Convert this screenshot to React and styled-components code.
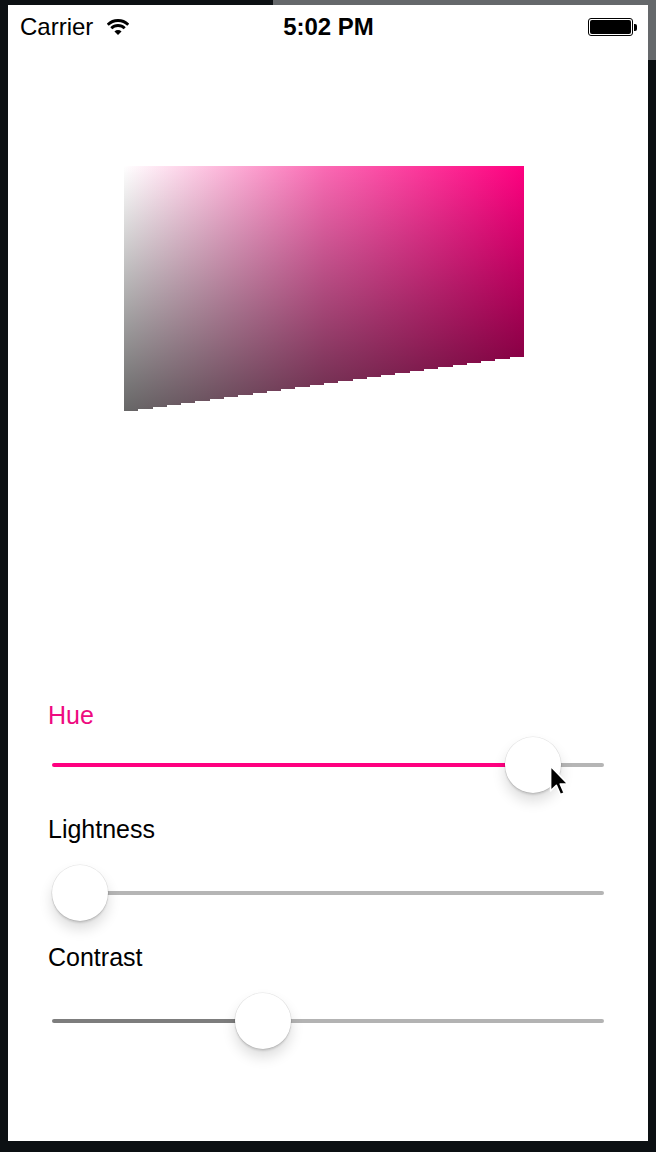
import React from "react";
import styled, { createGlobalStyle } from "styled-components";

const GlobalStyle = createGlobalStyle`
  html, body {
    margin: 0;
    padding: 0;
    background: #0c1013;
  }
  body {
    font-family: "Liberation Sans", Arial, sans-serif;
  }
`;

const PINK = "#ff0080";

const Device = styled.div`
  width: 656px;
  height: 1152px;
  box-sizing: border-box;
  padding: 5px 8px 11px 8px;
  background:
    linear-gradient(to right, transparent 273px, #65686b 273px) top left / 100% 5px no-repeat,
    linear-gradient(#65686b, #65686b) top right / 8px 60px no-repeat,
    #0c1013;
`;

const Screen = styled.div`
  width: 640px;
  height: 1136px;
  background: #ffffff;
  display: flex;
  flex-direction: column;
  overflow: hidden;
`;

const StatusBar = styled.div`
  height: 42px;
  box-sizing: border-box;
  padding: 2px 11px 0 12px;
  display: grid;
  grid-template-columns: 1fr auto 1fr;
  align-items: center;
  font-size: 24px;
  color: #000;
`;

const Carrier = styled.div`
  display: flex;
  align-items: center;
  gap: 14px;
`;

const Clock = styled.div`
  font-weight: bold;
`;

const BatteryWrap = styled.div`
  display: flex;
  align-items: center;
  justify-content: flex-end;
`;

const BatteryBody = styled.div`
  width: 45px;
  height: 18px;
  box-sizing: border-box;
  border: 1px solid #000;
  border-radius: 3px;
  padding: 1px;
  display: flex;
`;

const BatteryFill = styled.div`
  flex: 1;
  background: #000;
  border-radius: 2px;
`;

const BatteryNub = styled.div`
  width: 3px;
  height: 7px;
  margin-left: 1px;
  background: #000;
  border-radius: 0 2px 2px 0;
`;

const Plot = styled.svg`
  display: block;
  margin: 119px 0 0 116px;
`;

const Controls = styled.div`
  margin-top: 287px;
  padding: 0 40px;
  display: flex;
  flex-direction: column;
  gap: 21px;
`;

const Group = styled.div`
  display: flex;
  flex-direction: column;
`;

const Label = styled.div`
  font-size: 25px;
  line-height: 30px;
  color: ${(p) => (p.$active ? "#ee0a80" : "#000")};
  margin-bottom: ${(p) => p.$gap}px;
`;

const SliderRow = styled.div`
  position: relative;
  height: 56px;
  margin: 0 4px;
  display: flex;
  align-items: center;
`;

const Track = styled.div`
  flex: 1;
  height: 4px;
  border-radius: 2px;
  background: linear-gradient(
    to right,
    ${(p) => p.$min} ${(p) => p.$pct}%,
    ${(p) => p.$max} ${(p) => p.$pct}%
  );
`;

const Thumb = styled.div`
  position: absolute;
  top: 0;
  width: 56px;
  height: 56px;
  border-radius: 50%;
  background: #fff;
  box-shadow: 0 0 0 0.5px rgba(0, 0, 0, 0.1), 0 2px 2px rgba(0, 0, 0, 0.12),
    0 8px 14px rgba(0, 0, 0, 0.14);
`;

const Cursor = styled.svg`
  position: absolute;
  left: 497px;
  top: 27px;
`;

function Wifi() {
  return (
    <svg width="22" height="18" viewBox="0 0 22 18">
      <path
        d="M0.75 6.75 A14.5 14.5 0 0 1 21.25 6.75"
        fill="none"
        stroke="#000"
        strokeWidth="2.8"
      />
      <path
        d="M4.28 10.28 A9.5 9.5 0 0 1 17.72 10.28"
        fill="none"
        stroke="#000"
        strokeWidth="2.8"
      />
      <path d="M11 17 L7.46 13.46 A5 5 0 0 1 14.54 13.46 Z" fill="#000" />
    </svg>
  );
}

// staircase bottom edge, 2px per step
function plotPoints() {
  const pts = ["0,0", "400,0"];
  const steps = 28;
  let y = 191;
  for (let i = 0; i < steps; i++) {
    const x = Math.round(400 - (i * 400) / steps);
    const nx = Math.round(400 - ((i + 1) * 400) / steps);
    pts.push(`${x},${y}`);
    pts.push(`${nx},${y}`);
    y += 2;
    pts.push(`${nx},${y}`);
  }
  pts.push("0,247");
  return pts.join(" ");
}

function ColorPlot() {
  const pts = plotPoints();
  return (
    <Plot width="400" height="247" viewBox="0 0 400 247" shapeRendering="crispEdges">
      <defs>
        <linearGradient id="hueX" x1="0" y1="0" x2="1" y2="0">
          <stop offset="0" stopColor="#ffffff" />
          <stop offset="0.5" stopColor="#fb6ab4" />
          <stop offset="1" stopColor={PINK} />
        </linearGradient>
        <linearGradient id="shadeY" x1="0" y1="0" x2="0" y2="1">
          <stop offset="0" stopColor="#000" stopOpacity="0" />
          <stop offset="1" stopColor="#000" stopOpacity="0.6" />
        </linearGradient>
      </defs>
      <polygon points={pts} fill="url(#hueX)" />
      <polygon points={pts} fill="url(#shadeY)" />
    </Plot>
  );
}

const TRAVEL = 552 - 56;

function Slider({ value, min, max, children }) {
  return (
    <SliderRow>
      <Track $min={min} $max={max} $pct={(value * TRAVEL + 28) / 5.52} />
      <Thumb style={{ left: value * TRAVEL }} />
      {children}
    </SliderRow>
  );
}

const sliders = [
  { name: "Hue", value: 0.913, min: PINK, max: "#b5b5b5", gap: 7, active: true },
  { name: "Lightness", value: 0, min: "#b5b5b5", max: "#b5b5b5", gap: 21 },
  { name: "Contrast", value: 0.369, min: "#7d7d7d", max: "#b3b3b3", gap: 21 },
];

export default function App() {
  return (
    <>
      <GlobalStyle />
      <Device>
        <Screen>
          <StatusBar>
            <Carrier>
              Carrier
              <Wifi />
            </Carrier>
            <Clock>5:02 PM</Clock>
            <BatteryWrap>
              <BatteryBody>
                <BatteryFill />
              </BatteryBody>
              <BatteryNub />
            </BatteryWrap>
          </StatusBar>

          <ColorPlot />

          <Controls>
            {sliders.map((s) => (
              <Group key={s.name}>
                <Label $active={s.active} $gap={s.gap}>
                  {s.name}
                </Label>
                <Slider value={s.value} min={s.min} max={s.max}>
                  {s.active && (
                    <Cursor width="20" height="33" viewBox="0 0 12.5 20">
                      <path
                        d="M1 1 L1 16.5 L4.6 13 L7.1 18.8 L9.5 17.8 L7 12.2 L11.8 12.2 Z"
                        fill="#000"
                        stroke="#fff"
                        strokeWidth="1"
                        strokeLinejoin="round"
                      />
                    </Cursor>
                  )}
                </Slider>
              </Group>
            ))}
          </Controls>
        </Screen>
      </Device>
    </>
  );
}
